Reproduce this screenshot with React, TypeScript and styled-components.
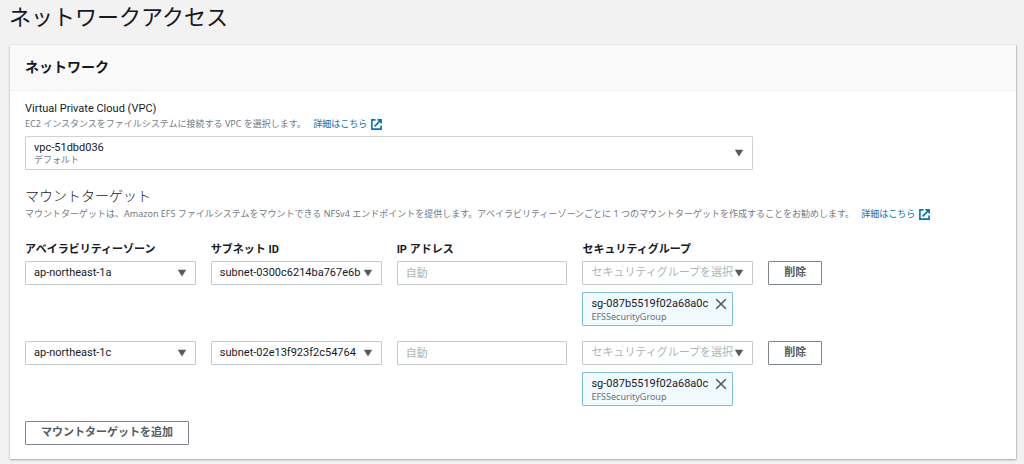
import React, { useId, useState } from "react";
import styled, { createGlobalStyle } from "styled-components";

const GlobalStyle = createGlobalStyle`
  *, *::before, *::after { box-sizing: border-box; }
  body {
    margin: 0;
    background: #f2f2f2;
    color: #16191f;
    font-family: Roboto, "Noto Sans CJK JP", sans-serif;
    font-size: 11px;
    line-height: 16px;
  }
  button, input, select { font: inherit; color: inherit; margin: 0; }
`;

const Page = styled.main`
  padding: 0 8px 8px 9px;
`;

const PageTitle = styled.h1`
  margin: 0;
  padding-bottom: 9px;
  font-size: 22px;
  line-height: 36px;
  font-weight: 400;
`;

const Panel = styled.section`
  margin-left: 1px;
  background: #fff;
  border-top: 1px solid #f6f7f7;
  box-shadow: 0 1px 2px rgba(0, 28, 36, 0.35), 1px 0 1px rgba(0, 28, 36, 0.1);
`;

const PanelHeader = styled.header`
  padding: 10px 15px 12px;
  background: #fafafa;
  border-bottom: 1px solid #f0f2f2;
`;

const PanelTitle = styled.h2`
  margin: 0;
  font-size: 14px;
  line-height: 22px;
  font-weight: 700;
`;

const PanelBody = styled.div`
  padding: 10px 15px 14px;
`;

const Columns = styled.div`
  display: grid;
  grid-template-columns: repeat(16, minmax(0, 1fr));
  column-gap: 15px;
`;

const Cell = styled.div<{ $span: number }>`
  grid-column: span ${(p) => p.$span};
`;

const Label = styled.label<{ $bold?: boolean }>`
  display: block;
  font-weight: ${(p) => (p.$bold ? 700 : 400)};
`;

const Description = styled.p`
  margin: 0;
  color: #737b83;
  font-family: "Noto Sans", "Noto Sans CJK JP", sans-serif;
  font-size: 9px;
  line-height: 14px;
`;

const Field = styled.div`
  display: grid;
  gap: 5px;
`;

const SectionTitle = styled.h3`
  margin: 0;
  font-size: 14px;
  line-height: 22px;
  font-weight: 300;
`;

const Section = styled.section`
  margin-top: 15px;
`;

const Link = styled.a`
  display: inline-flex;
  align-items: center;
  gap: 4px;
  margin-left: 5px;
  color: #0073bb;
  text-decoration: none;
  vertical-align: top;
`;

const SelectBox = styled.div`
  display: grid;
  align-items: center;
  > * { grid-area: 1 / 1; }
  > svg {
    justify-self: end;
    margin-right: 9px;
    pointer-events: none;
  }
`;

const Select = styled.select<{ $tall?: boolean; $empty?: boolean }>`
  appearance: none;
  width: 100%;
  height: ${(p) => (p.$tall ? 34 : 24)}px;
  padding: ${(p) => (p.$tall ? "0 16px 11px 8px" : "0 16px 0 8px")};
  border: 1px solid ${(p) => (p.$tall ? "#cdd3d4" : "#c3cacb")};
  border-radius: 1px;
  background: #fff;
  color: ${(p) => (p.$empty ? "#aab7b8" : "#16191f")};
`;

const SelectNote = styled.span`
  align-self: end;
  padding: 0 9px 4px;
  color: #737b83;
  font-size: 9px;
  line-height: 12px;
  pointer-events: none;
`;

const TextInput = styled.input`
  display: block;
  width: 100%;
  height: 24px;
  padding: 0 8px;
  border: 1px solid #c3cacb;
  border-radius: 1px;
  background: #fff;
  &::placeholder { color: #aab7b8; opacity: 1; }
`;

const Button = styled.button`
  height: 24px;
  padding: 0 15px;
  border: 1px solid #7d848b;
  border-radius: 1px;
  background: #fff;
  color: #545b64;
  font-weight: 700;
  white-space: nowrap;
`;

const ColumnHeads = styled(Columns)`
  margin-top: 21px;
  padding-bottom: 3px;
`;

const TargetRow = styled(Columns)`
  padding-bottom: 15px;
  align-items: start;
`;

const Token = styled.div`
  display: inline-flex;
  align-items: flex-start;
  gap: 7px;
  height: 34px;
  margin-top: 7px;
  padding: 3px 5px 0 8px;
  border: 1px solid #7cc0d0;
  border-radius: 1px;
  background: #f1faff;
  vertical-align: top;
`;

const TokenText = styled.div`
  line-height: 15px;
`;

const TokenNote = styled.div`
  color: #687078;
  font-family: "Noto Sans", "Noto Sans CJK JP", sans-serif;
  font-size: 9px;
  line-height: 12px;
`;

const TokenClose = styled.button`
  display: flex;
  padding: 2px 0 0;
  border: 0;
  background: none;
  color: #545b64;
`;

const Caret = () => (
  <svg width="10" height="8" viewBox="0 0 10 8" aria-hidden="true">
    <path d="M0.8 0.8h8.4L5 7.4z" fill="#545b64" />
  </svg>
);

const ExternalIcon = () => (
  <svg width="11" height="11" viewBox="0 0 11 11" fill="none" stroke="currentColor" strokeWidth="1.6" aria-hidden="true">
    <path d="M4.5 0.9H0.9v9.2h9.2V6.6M6.4 0.9h3.7v3.7M9.9 1.1L3.6 7.4" />
  </svg>
);

const CloseIcon = () => (
  <svg width="12" height="12" viewBox="0 0 12 12" fill="none" stroke="currentColor" strokeWidth="1.6" aria-hidden="true">
    <path d="M1.2 1.2l9.6 9.6M10.8 1.2L1.2 10.8" />
  </svg>
);

const LearnMore = () => (
  <Link href="#learn-more">
    詳細はこちら
    <ExternalIcon />
  </Link>
);

type Target = { zone: string; subnet: string };

const targets: Target[] = [
  { zone: "ap-northeast-1a", subnet: "subnet-0300c6214ba767e6b" },
  { zone: "ap-northeast-1c", subnet: "subnet-02e13f923f2c54764" },
];

type DropDownProps = { labelId: string; value?: string; placeholder?: string };

function DropDown({ labelId, value, placeholder }: DropDownProps) {
  return (
    <SelectBox>
      <Select aria-labelledby={labelId} $empty={!value}>
        <option>{value ?? placeholder}</option>
      </Select>
      <Caret />
    </SelectBox>
  );
}

export default function App() {
  const id = useId();
  const [ips, setIps] = useState<string[]>(targets.map(() => ""));
  const heads = ["アベイラビリティーゾーン", "サブネット ID", "IP アドレス", "セキュリティグループ"];
  const headId = (column: number) => `${id}head${column}`;

  return (
    <>
      <GlobalStyle />
      <Page lang="ja">
        <PageTitle>ネットワークアクセス</PageTitle>
        <Panel>
          <PanelHeader>
            <PanelTitle>ネットワーク</PanelTitle>
          </PanelHeader>
          <PanelBody>
            <Field>
              <div>
                <Label htmlFor={`${id}vpc`}>Virtual Private Cloud (VPC)</Label>
                <Description>
                  EC2 インスタンスをファイルシステムに接続する VPC を選択します。 <LearnMore />
                </Description>
              </div>
              <Columns>
                <Cell $span={12}>
                  <SelectBox>
                    <Select id={`${id}vpc`} $tall>
                      <option>vpc-51dbd036</option>
                    </Select>
                    <SelectNote>デフォルト</SelectNote>
                    <Caret />
                  </SelectBox>
                </Cell>
              </Columns>
            </Field>
            <Section>
              <SectionTitle>マウントターゲット</SectionTitle>
              <Description>
                マウントターゲットは、Amazon EFS ファイルシステムをマウントできる NFSv4 エンドポイントを提供します。アベイラビリティーゾーンごとに 1 つのマウントターゲットを作成することをお勧めします。 <LearnMore />
              </Description>
              <ColumnHeads>
                {heads.map((head, column) => (
                  <Cell $span={3} key={head}>
                    <Label as="span" $bold id={headId(column)}>{head}</Label>
                  </Cell>
                ))}
              </ColumnHeads>
              {targets.map((target, row) => (
                <TargetRow key={target.zone}>
                  <Cell $span={3}>
                    <DropDown labelId={headId(0)} value={target.zone} />
                  </Cell>
                  <Cell $span={3}>
                    <DropDown labelId={headId(1)} value={target.subnet} />
                  </Cell>
                  <Cell $span={3}>
                    <TextInput
                      aria-labelledby={headId(2)}
                      placeholder="自動"
                      value={ips[row]}
                      onChange={(e) => setIps(ips.map((ip, i) => (i === row ? e.target.value : ip)))}
                    />
                  </Cell>
                  <Cell $span={3}>
                    <DropDown labelId={headId(3)} placeholder="セキュリティグループを選択" />
                    <Token>
                      <TokenText>
                        sg-087b5519f02a68a0c
                        <TokenNote>EFSSecurityGroup</TokenNote>
                      </TokenText>
                      <TokenClose type="button" aria-label="sg-087b5519f02a68a0c を削除">
                        <CloseIcon />
                      </TokenClose>
                    </Token>
                  </Cell>
                  <Cell $span={4}>
                    <Button type="button">削除</Button>
                  </Cell>
                </TargetRow>
              ))}
              <Button type="button">マウントターゲットを追加</Button>
            </Section>
          </PanelBody>
        </Panel>
      </Page>
    </>
  );
}
